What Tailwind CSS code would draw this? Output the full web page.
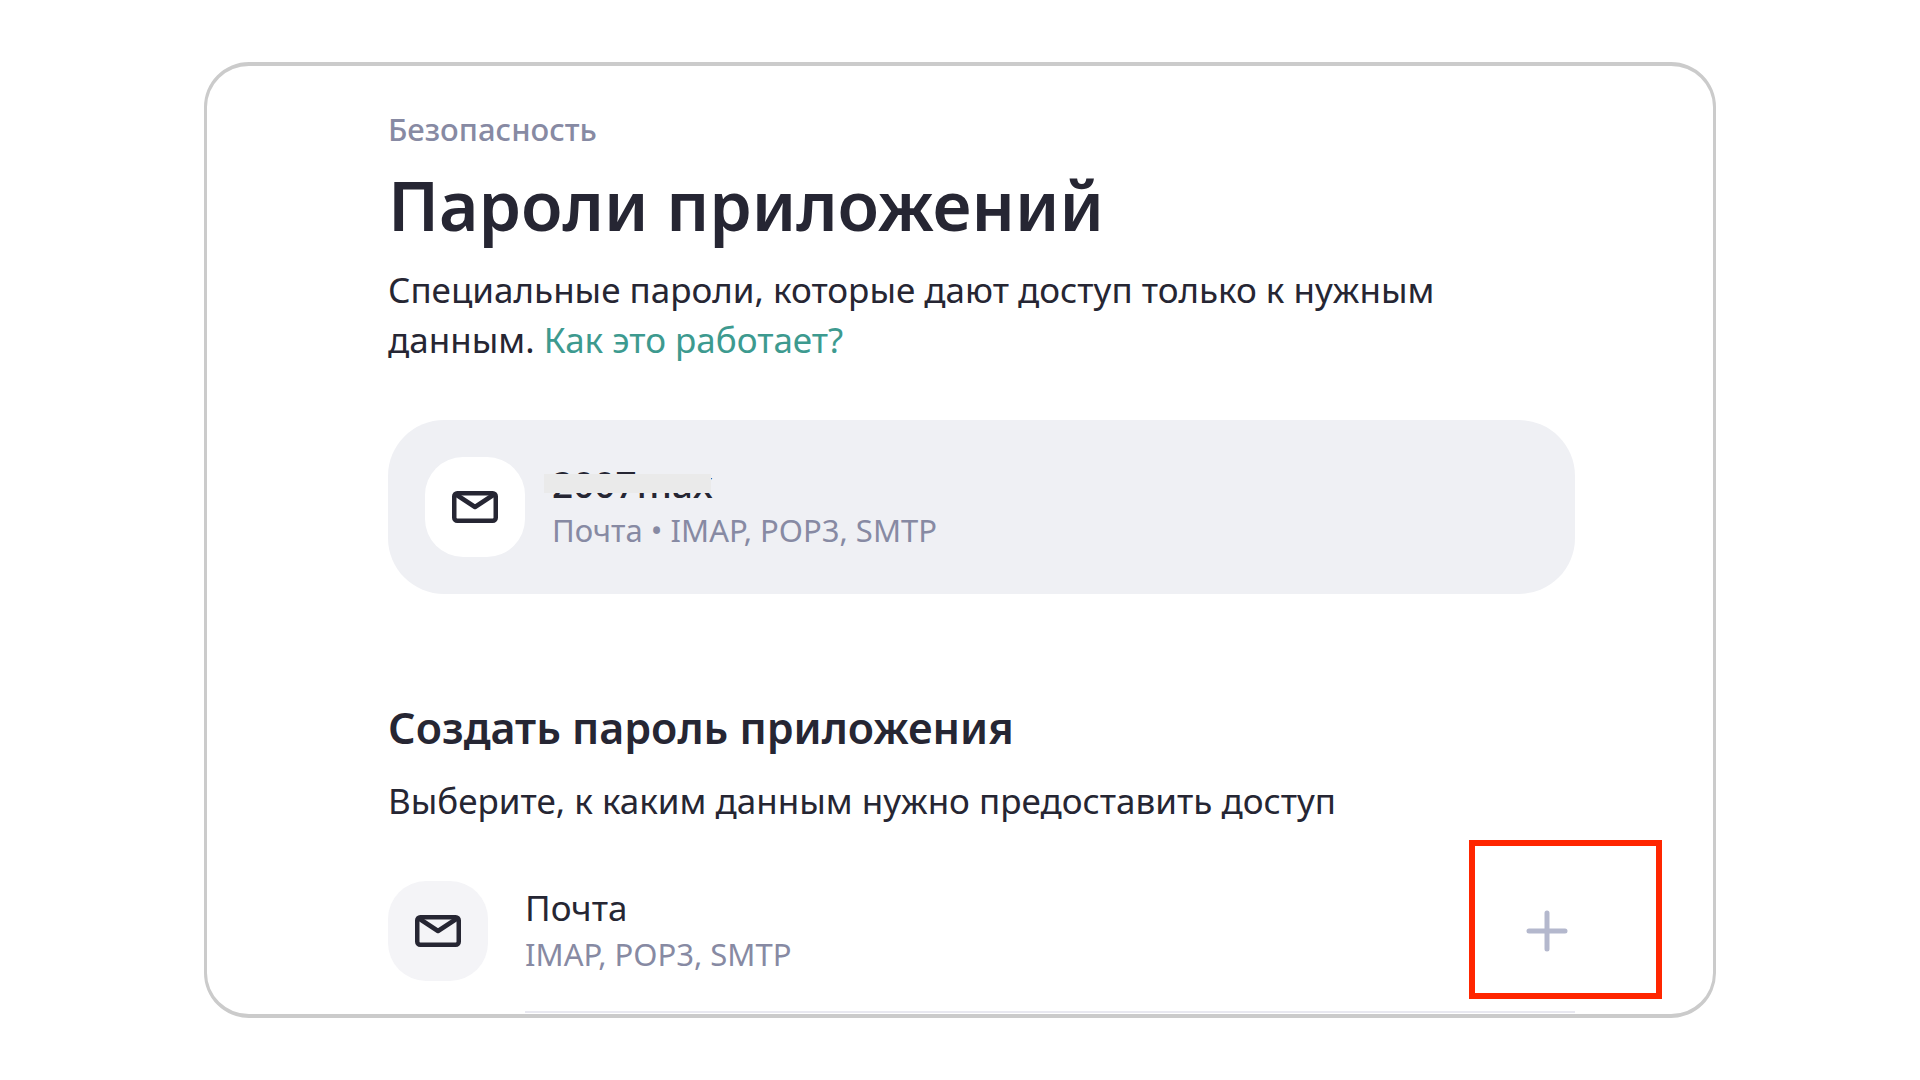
<!DOCTYPE html>
<html lang="ru">
<head>
    <meta charset="UTF-8">
    <meta name="viewport" content="width=device-width, initial-scale=1.0">
    <title>Пароли приложений</title>
    <script src="https://cdn.jsdelivr.net/npm/@tailwindcss/browser@4"></script>
    <style>
        body {
            font-family: 'Noto Sans', 'Open Sans', sans-serif;
        }
    </style>
</head>
<body class="bg-white text-[#262633] px-6 py-[62px]">
    <main class="max-w-[1512px] mx-auto overflow-hidden rounded-[45px] border-x-3 border-y-4 border-[#cbcbcb] bg-white pt-[43px] pb-px pl-[181px] pr-[138px]">

        <!-- Page header -->
        <header>
            <a href="#" class="block w-fit text-[31px] leading-[40px] font-medium text-[#878aa3]">Безопасность</a>
            <h1 class="mt-4 text-[68px] leading-[80px] font-semibold">Пароли приложений</h1>
            <p class="mt-5 text-[35px] leading-[50px]">
                Специальные пароли, которые дают доступ только к нужным
                данным. <a href="#" class="text-[#3d9a8f]">Как это работает?</a>
            </p>
        </header>

        <!-- Existing password -->
        <section class="mt-[55px] flex items-center gap-[27px] rounded-[56px] bg-[#eff0f4] p-[37px]">
            <div class="flex size-[100px] shrink-0 items-center justify-center rounded-[38px] bg-white">
                <svg class="w-[46px] h-[32px]" viewBox="0 0 46 32" fill="none" stroke="#262633" stroke-width="4.5" stroke-linejoin="round" aria-hidden="true">
                    <rect x="2.25" y="2.25" width="41.5" height="27.5" rx="3"/>
                    <path d="M4 3.5 23 16 42 3.5"/>
                </svg>
            </div>
            <div class="leading-[46px]">
                <div class="relative w-fit text-[37px] font-medium">
                    2007max
                    <span class="absolute -left-2 top-[13px] h-[19px] w-[167px] bg-[#eaeaea]"></span>
                </div>
                <div class="text-[31px] text-[#878aa3]">Почта • IMAP, POP3, SMTP</div>
            </div>
        </section>

        <!-- New password -->
        <section class="mt-[106px]">
            <h2 class="text-[43px] leading-[56px] font-semibold">Создать пароль приложения</h2>
            <p class="mt-5 text-[35px] leading-[50px]">Выберите, к каким данным нужно предоставить доступ</p>

            <div class="relative mt-[55px] flex items-start gap-[37px]">
                <div class="flex size-[100px] shrink-0 items-center justify-center rounded-[38px] bg-[#f4f4f7]">
                    <svg class="w-[46px] h-[32px]" viewBox="0 0 46 32" fill="none" stroke="#262633" stroke-width="4.5" stroke-linejoin="round" aria-hidden="true">
                        <rect x="2.25" y="2.25" width="41.5" height="27.5" rx="3"/>
                        <path d="M4 3.5 23 16 42 3.5"/>
                    </svg>
                </div>
                <div class="flex min-h-[132px] grow items-center justify-between border-b-2 border-[#e8e8f0] pb-[30px]">
                    <div class="leading-[46px]">
                        <div class="text-[35px]">Почта</div>
                        <div class="text-[31px] text-[#878aa3]">IMAP, POP3, SMTP</div>
                    </div>
                    <button type="button" aria-label="Создать пароль для почты" class="flex size-14 items-center justify-center cursor-pointer">
                        <svg class="size-[42px]" viewBox="0 0 42 42" fill="none" stroke="#b4b8cd" stroke-width="5" stroke-linecap="round" aria-hidden="true">
                            <path d="M21 3v36M3 21h36"/>
                        </svg>
                    </button>
                </div>
                <!-- Highlight frame around the add button -->
                <span class="pointer-events-none absolute -top-[41px] -right-[87px] h-[159px] w-[193px] border-6 border-[#ff2600]"></span>
            </div>
        </section>
    </main>
</body>
</html>
